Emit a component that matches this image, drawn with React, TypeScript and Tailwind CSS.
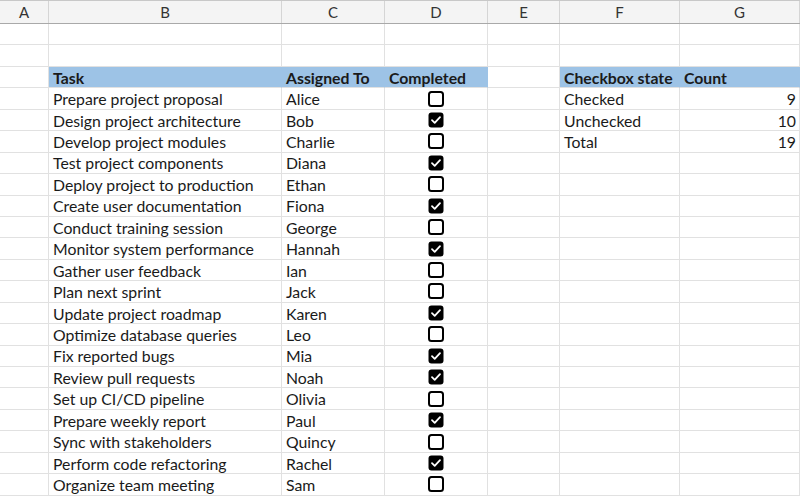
import React from "react";

const colW = ["w-[49px]", "w-[233px]", "w-[103px]", "w-[103px]", "w-[72px]", "w-[120px]", "w-[120px]"];
const letters = ["A", "B", "C", "D", "E", "F", "G"];

const tasks: [string, string, boolean][] = [
  ["Prepare project proposal", "Alice", false],
  ["Design project architecture", "Bob", true],
  ["Develop project modules", "Charlie", false],
  ["Test project components", "Diana", true],
  ["Deploy project to production", "Ethan", false],
  ["Create user documentation", "Fiona", true],
  ["Conduct training session", "George", false],
  ["Monitor system performance", "Hannah", true],
  ["Gather user feedback", "Ian", false],
  ["Plan next sprint", "Jack", false],
  ["Update project roadmap", "Karen", true],
  ["Optimize database queries", "Leo", false],
  ["Fix reported bugs", "Mia", true],
  ["Review pull requests", "Noah", true],
  ["Set up CI/CD pipeline", "Olivia", false],
  ["Prepare weekly report", "Paul", true],
  ["Sync with stakeholders", "Quincy", false],
  ["Perform code refactoring", "Rachel", true],
  ["Organize team meeting", "Sam", false],
];

const summary: [string, string][] = [
  ["Checked", "9"],
  ["Unchecked", "10"],
  ["Total", "19"],
];

function Box({ checked }: { checked: boolean }) {
  return (
    <svg width="16" height="16" viewBox="0 0 16 16" className="-mt-[1px]">
      {checked ? (
        <>
          <rect x="0.5" y="0.5" width="15" height="15" rx="3" fill="#000" />
          <path d="M4 8.2 L6.7 10.8 L12 5.2" stroke="#fff" strokeWidth="1.8" fill="none" strokeLinecap="round" strokeLinejoin="round" />
        </>
      ) : (
        <rect x="1" y="1" width="14" height="14" rx="2.5" fill="#fff" stroke="#000" strokeWidth="2" />
      )}
    </svg>
  );
}

type Cell = { text?: React.ReactNode; bold?: boolean; blue?: boolean; align?: "left" | "right" | "center" };

function Row({ cells }: { cells: Cell[] }) {
  return (
    <div className="flex h-[21.45px]">
      {colW.map((w, i) => {
        const c = cells[i] || {};
        return (
          <div
            key={i}
            className={
              w +
              " shrink-0 h-full flex items-center border-b border-r border-b-[#e1e1e1] px-[4px] pt-[1px] overflow-hidden whitespace-nowrap " +
              (c.blue ? "bg-[#9dc3e6] border-r-[#9dc3e6] " : "border-r-[#e1e1e1] ") +
              (c.bold ? "font-bold " : "") +
              (c.align === "right" ? "justify-end pr-[3px] " : c.align === "center" ? "justify-center " : "")
            }
          >
            {c.text}
          </div>
        );
      })}
    </div>
  );
}

export default function App() {
  const rows: Cell[][] = [];
  rows.push([]);
  rows.push([]);
  rows.push([
    {},
    { text: "Task", bold: true, blue: true },
    { text: "Assigned To", bold: true, blue: true },
    { text: "Completed", bold: true, blue: true },
    {},
    { text: "Checkbox state", bold: true, blue: true },
    { text: "Count", bold: true, blue: true },
  ]);
  tasks.forEach((t, i) => {
    const s = summary[i];
    rows.push([
      {},
      { text: t[0] },
      { text: t[1] },
      { text: <Box checked={t[2]} />, align: "center" },
      {},
      s ? { text: s[0] } : {},
      s ? { text: s[1], align: "right" } : {},
    ]);
  });

  return (
    <div className="w-[800px] h-[500px] overflow-hidden bg-white text-[#1a1a1a] text-[15.8px] leading-none font-['Lato','Liberation_Sans',sans-serif]">
      <div className="flex h-[24px] bg-[#f4f4f4] border-t border-t-[#c8c8c8] border-b border-b-[#a9a9a9]">
        {colW.map((w, i) => (
          <div key={i} className={w + " shrink-0 flex items-center justify-center border-r border-r-[#d5d5d5] text-[#333] text-[15px]"}>
            {letters[i]}
          </div>
        ))}
      </div>
      {rows.map((r, i) => (
        <Row key={i} cells={r} />
      ))}
    </div>
  );
}
